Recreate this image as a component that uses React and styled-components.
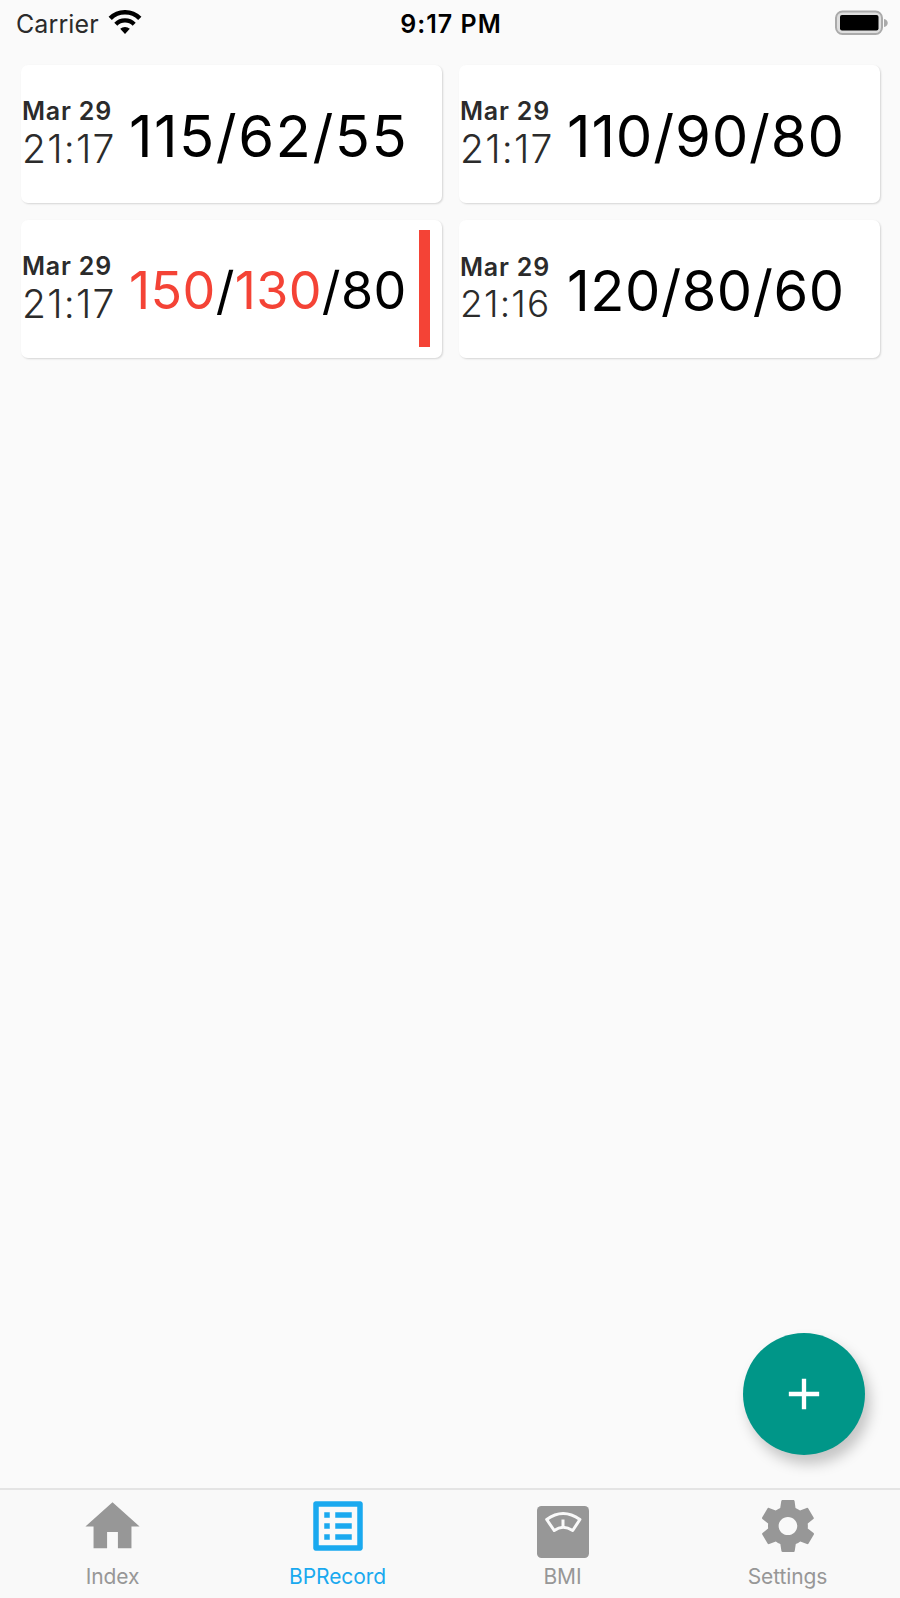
import React, { useState } from "react";
import styled, { createGlobalStyle } from "styled-components";
import { MdAdd, MdHome, MdListAlt } from "react-icons/md";
import { IoMdSettings } from "react-icons/io";

const GlobalStyle = createGlobalStyle`
  * {
    box-sizing: border-box;
  }

  body {
    margin: 0;
    background-color: #fafafa;
  }
`;

const Container = styled.div`
  position: relative;
  display: flex;
  flex-direction: column;
  width: 900px;
  height: 1598px;
  overflow: hidden;
  background-color: #fafafa;
  font-family: Inter, "Liberation Sans", sans-serif;
  color: black;
`;

const StatusBar = styled.div`
  display: grid;
  grid-template-columns: 1fr auto 1fr;
  align-items: center;
  height: 48px;
  padding: 0 12px 0 16px;
  font-size: 25px;
  line-height: 30px;
`;

const Carrier = styled.div`
  display: flex;
  align-items: center;
  gap: 9px;
  color: #2b2b2b;
  letter-spacing: 0.1px;

  svg {
    margin-bottom: 3px;
  }
`;

const Clock = styled.div`
  padding-right: 2px;
  font-weight: 600;
  letter-spacing: 1px;
`;

const Battery = styled.div`
  justify-self: end;
  display: flex;
  margin-bottom: 2px;
`;

const Records = styled.div`
  flex: 1;
  display: grid;
  grid-template-columns: 421px 421px;
  grid-auto-rows: 138px;
  align-content: start;
  gap: 17px;
  padding: 17px 20px 0 21px;
`;

const Card = styled.div`
  display: flex;
  align-items: center;
  border-radius: 7px;
  background-color: white;
  box-shadow: 1px 1px 2px rgba(0, 0, 0, 0.15);
`;

const When = styled.div`
  flex: none;
  width: 108px;
  padding: 0 0 4px 1px;
`;

const Day = styled.div`
  font-size: 25px;
  font-weight: 600;
  line-height: 30px;
  letter-spacing: 0.8px;
  color: #2b2b2b;
  white-space: nowrap;
`;

const Time = styled.div`
  margin-top: 3px;
  font-size: ${(props) => props.$size}px;
  font-weight: 340;
  line-height: ${(props) => props.$size + 1}px;
  letter-spacing: 1.2px;
  color: #2b2b2b;
  white-space: nowrap;
`;

const Value = styled.div`
  flex: none;
  padding-top: 3px;
  font-size: ${(props) => props.$size}px;
  font-weight: 370;
  line-height: 70px;
  letter-spacing: ${(props) => props.$spacing}px;
  white-space: nowrap;
`;

const Reading = styled.span`
  color: ${(props) => (props.$high ? "#f44336" : "black")};
`;

const Alert = styled.div`
  width: 11px;
  height: 117px;
  margin-left: auto;
  margin-right: 12px;
  margin-bottom: 1px;
  background-color: #f44336;
`;

const AddButton = styled.button`
  position: absolute;
  right: 35px;
  bottom: 143px;
  display: flex;
  align-items: center;
  justify-content: center;
  width: 122px;
  height: 122px;
  padding: 0 0 1px 0;
  border: none;
  border-radius: 50%;
  background-color: #009688;
  color: white;
  box-shadow: 5px 9px 14px rgba(0, 0, 0, 0.22);
  cursor: pointer;
`;

const TabBar = styled.nav`
  display: flex;
  height: 110px;
  border-top: 2px solid #e4e4e4;
  background-color: #f9f9f9;
`;

const Tab = styled.button`
  flex: 1;
  display: flex;
  flex-direction: column;
  align-items: center;
  padding: 3px 0 0;
  border: none;
  background: none;
  font-family: inherit;
  color: ${(props) => (props.$active ? "#1aa9ef" : "#979797")};
  cursor: pointer;
`;

const TabIcon = styled.div`
  display: flex;
  align-items: center;
  justify-content: center;
  height: 66px;
  padding-top: ${(props) => props.$drop || 0}px;
`;

const TabLabel = styled.div`
  margin-top: 5px;
  font-size: 21px;
  line-height: 26px;
  letter-spacing: -0.1px;
`;

const WifiIcon = () => (
  <svg width="34" height="25" viewBox="0 0 34 25">
    <path d="M2.2 8.4a21 21 0 0 1 29.6 0" fill="none" stroke="black" strokeWidth="4.6" />
    <path d="M7.8 14.2a13 13 0 0 1 18.4 0" fill="none" stroke="black" strokeWidth="4.3" />
    <path d="M12.2 18.8a7 7 0 0 1 9.6 0L17 24z" fill="black" />
  </svg>
);

const BatteryIcon = () => (
  <svg width="54" height="26" viewBox="0 0 54 26">
    <rect x="2" y="1.5" width="46" height="22.5" rx="6.5" fill="#dedede" stroke="#aaa" strokeWidth="2" />
    <rect x="6" y="5" width="38.5" height="15.5" rx="2" fill="black" />
    <path d="M50 9c5 1 5 7 0 8z" fill="#aaa" />
  </svg>
);

const ScaleIcon = () => (
  <svg width="52" height="52" viewBox="0 0 52 52">
    <rect width="52" height="52" rx="4.5" fill="currentColor" />
    <g fill="none" stroke="#f9f9f9" strokeWidth="3" strokeLinejoin="round">
      <path d="M9.7 13.5Q26 1.5 42.9 13.5L35.7 24.5Q26 18 17.2 24.5z" />
      <path d="M26 13.5v7.5" />
    </g>
  </svg>
);

const records = [
  { id: 1, day: "Mar 29", time: "21:17", timeSize: 39, values: [115, 62, 55], size: 58, spacing: 1.45 },
  { id: 2, day: "Mar 29", time: "21:17", timeSize: 39, values: [110, 90, 80], size: 58, spacing: 0.8 },
  { id: 3, day: "Mar 29", time: "21:17", timeSize: 39, values: [150, 130, 80], size: 52, spacing: 0.35 },
  { id: 4, day: "Mar 29", time: "21:16", timeSize: 37, values: [120, 80, 60], size: 56, spacing: 0.55 },
];

const limits = [140, 100, 100];

const tabs = [
  { name: "Index", icon: <MdHome size={65} /> },
  { name: "BPRecord", icon: <MdListAlt size={66} /> },
  { name: "BMI", icon: <ScaleIcon />, drop: 11 },
  { name: "Settings", icon: <IoMdSettings size={64} /> },
];

const Record = ({ record }) => {
  const high = record.values.map((value, i) => value >= limits[i]);

  return (
    <Card>
      <When>
        <Day>{record.day}</Day>
        <Time $size={record.timeSize}>{record.time}</Time>
      </When>
      <Value $size={record.size} $spacing={record.spacing}>
        {record.values.map((value, i) => (
          <React.Fragment key={i}>
            {i > 0 && "/"}
            <Reading $high={high[i]}>{value}</Reading>
          </React.Fragment>
        ))}
      </Value>
      {high.includes(true) && <Alert />}
    </Card>
  );
};

const App = () => {
  const [active, setActive] = useState("BPRecord");

  return (
    <Container>
      <GlobalStyle />
      <StatusBar>
        <Carrier>
          Carrier
          <WifiIcon />
        </Carrier>
        <Clock>9:17 PM</Clock>
        <Battery>
          <BatteryIcon />
        </Battery>
      </StatusBar>
      <Records>
        {records.map((record) => (
          <Record key={record.id} record={record} />
        ))}
      </Records>
      <AddButton aria-label="Add">
        <MdAdd size={52} />
      </AddButton>
      <TabBar>
        {tabs.map((tab) => (
          <Tab key={tab.name} $active={tab.name === active} onClick={() => setActive(tab.name)}>
            <TabIcon $drop={tab.drop}>{tab.icon}</TabIcon>
            <TabLabel>{tab.name}</TabLabel>
          </Tab>
        ))}
      </TabBar>
    </Container>
  );
};

export default App;
